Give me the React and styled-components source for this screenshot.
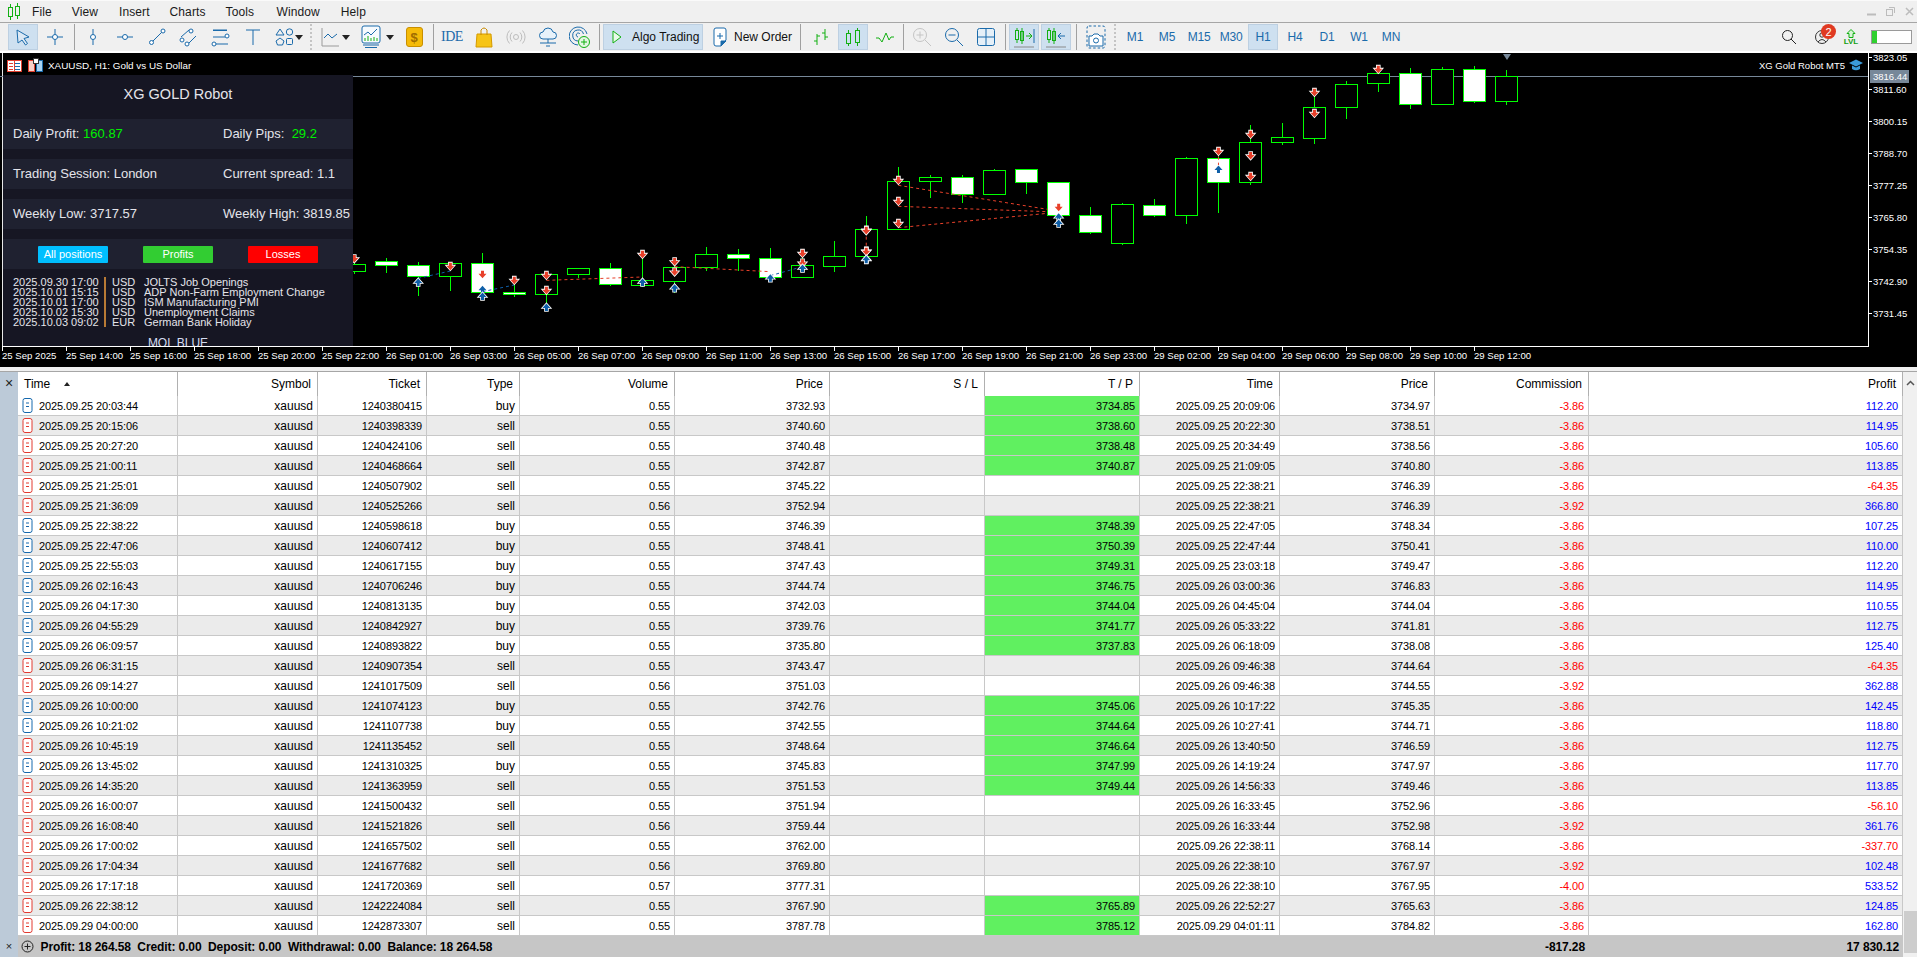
import React from "react";
import styled, { createGlobalStyle } from "styled-components";

const Global = createGlobalStyle`
  html, body { margin: 0; padding: 0; background: #f0f0f0; }
  #root { width: 1917px; height: 957px; overflow: hidden; }
  * { box-sizing: border-box; }
`;
const SANS = `"Liberation Sans", Arial, sans-serif`;
const BLUE = "#1b6bab";
const GREEN = "#12b012";

const Page = styled.div`
  width: 1917px; height: 957px; display: flex; flex-direction: column;
  font-family: ${SANS}; background: #f0f0f0; overflow: hidden; position: relative;
`;
const MenuBar = styled.div`
  height: 22px; display: flex; align-items: center; position: relative; flex: none;
  border-top: 1px solid #fafafa; padding-left: 8px; font-size: 12px; color: #1a1a1a;
`;
const Logo = styled.svg`width: 12px; height: 17px; margin-right: 12px; flex: none;`;
const MenuItem = styled.span`margin-right: ${p => p.$r || 20}px; letter-spacing: .1px;`;
const WinControls = styled.div`
  position: absolute; right: -2px; top: 3px; display: flex; align-items: center; height: 14px;
`;
const WinSlot = styled.span`width: 19px; display: flex; justify-content: center;`;
const ToolBar = styled.div`
  height: 31px; flex: none; display: flex; align-items: center; padding-left: 7px;
  border-top: 1px solid #a6a6a6; border-bottom: 2px solid #fff; background: #f0f0f0; position: relative;
`;
const Tool = styled.div`
  width: ${p => p.$w || 30}px; height: 26px; margin: 0 1px; flex: none; display: flex; align-items: center;
  justify-content: ${p => p.$left ? "flex-start" : "center"}; gap: ${p => p.$gap || 0}px;
  padding-left: ${p => p.$pl || 0}px;
  background: ${p => p.$on ? "#cee0f0" : "transparent"};
  border: 1px solid ${p => p.$on ? "#bdd0e2" : "transparent"};
  font-size: 12px; color: #111;
`;
const Period = styled(Tool)`
  color: ${BLUE}; font-size: 12px; letter-spacing: -.2px;
`;
const Sep = styled.div`
  width: ${p => p.$w || 6}px; height: 26px; flex: none; position: relative; display: flex; justify-content: center;
  &::after { content: ""; width: 1px; height: 100%; ${p => p.$dotted
    ? "border-left: 2px dotted #c4c4c4;" : "background: #a0a0a0;"} }
`;
const Caret = styled.span`
  width: 0; height: 0; border-left: 4px solid transparent; border-right: 4px solid transparent;
  border-top: 5px solid #222; flex: none;
`;
const IdeText = styled.span`font-family: "Liberation Serif", serif; color: ${BLUE}; font-size: 14px; letter-spacing: -.5px;`;
const Dollar = styled.span`
  width: 17px; height: 20px; border-radius: 3px; background: #f5bb0a; border: 1px solid #c98f00; color: #a06c00;
  font-size: 13px; font-weight: 700; display: flex; align-items: center; justify-content: center;
`;
const RightGroup = styled.div`margin-left: auto; display: flex; align-items: center; padding-right: 5px; height: 26px;`;
const Slot = styled.div`
  width: ${p => p.$w}px; height: 26px; display: flex; align-items: center; justify-content: center; position: relative; flex: none;
`;
const Badge = styled.span`
  position: absolute; left: 16px; top: 0; width: 15px; height: 15px; border-radius: 50%;
  background: #e03a22; color: #fff; font-size: 11px; display: flex; align-items: center; justify-content: center;
`;
const LevelBar = styled.div`
  width: 41px; height: 14px; background: #fff; border: 1px solid #9a9a9a; flex: none; margin-left: 7px;
  &::before { content: ""; display: block; width: 5px; height: 100%; background: #2fd02f; }
`;
const ChartArea = styled.div`height: 314px; flex: none; position: relative; background: #000; overflow: hidden;`;
const ChartSvg = styled.svg`display: block; width: 1917px; height: 314px;`;
const RobotPanel = styled.div`
  position: absolute; left: 3px; top: 22px; width: 350px; height: 271px; background: #161623;
  color: #e4e4ea; overflow: hidden; font-size: 13px;
`;
const RobotTitle = styled.div`height: 44px; padding-top: 10px; line-height: 18px; text-align: center; font-size: 14.5px;`;
const InfoRow = styled.div`
  height: 30px; margin-bottom: 10px; background: #1f2130; display: grid; grid-template-columns: 210px 1fr;
  align-items: center; padding: 0 0 2px 10px; white-space: pre;
`;
const Val = styled.span`color: #00f000;`;
const FilterRow = styled.div`
  height: 30px; background: #1f2130; display: flex; align-items: center; padding-left: 35px; gap: 35px;
`;
const FilterBtn = styled.div`
  width: 70px; height: 17px; border-radius: 1px; background: ${p => p.$c}; color: #fff; font-size: 11px;
  display: flex; align-items: center; justify-content: center;
`;
const NewsList = styled.div`
  margin-top: 8px; padding-left: 10px; display: grid; grid-template-columns: 91px 40px 1fr;
  font-size: 11px; line-height: 10px; white-space: nowrap;
`;
const NewsCur = styled.span`border-left: 2px solid #b87a35; padding-left: 6px; height: 10px;`;
const MqlLabel = styled.div`text-align: center; font-size: 12px; margin-top: 9px; line-height: 14px; color: #d4dcf0;`;
const Gap = styled.div`height: 4px; flex: none; background: #f0f0f0;`;
const Terminal = styled.div`flex: 1; display: flex; border-top: 1px solid #a6a6a6; min-height: 0;`;
const SideTab = styled.div`
  width: 18px; flex: none; background: #bccad8; display: flex; flex-direction: column; justify-content: space-between;
  align-items: center; font-size: 13px; color: #222; overflow: hidden;
`;
const SideX = styled.span`line-height: 22px; height: 22px; font-size: ${p => p.$s || 14}px;`;
const GridWrap = styled.div`width: 1885px; flex: none; background: #fff; overflow: hidden;`;
const Table = styled.table`
  width: 1885px; table-layout: fixed; border-collapse: separate; border-spacing: 0; font-size: 11px; color: #000;
`;
const Th = styled.th`
  height: 24px; padding: 0 6px 0 0; font-weight: 400; font-size: 12px; text-align: ${p => p.$left ? "left" : "right"};
  border-right: 1px solid #b0b0b0; background: #fff; white-space: nowrap; color: #000;
`;
const HeadTime = styled.span`display: inline-flex; align-items: center; gap: 14px; padding-left: 6px;`;
const SortCaret = styled.span`
  width: 0; height: 0; border-left: 3px solid transparent; border-right: 3px solid transparent; border-bottom: 4px solid #222;
`;
const Tr = styled.tr`background: ${p => p.$alt ? "#ebebeb" : "#fff"};`;
const Td = styled.td`
  height: 20px; padding: 0 4px 0 0; text-align: right; white-space: nowrap; border-bottom: 1px solid #c8c8c8;
  border-right: 1px solid #c8c8c8; font-size: ${p => p.$text ? 12 : 11}px; letter-spacing: ${p => p.$text ? 0 : "-.1px"};
  background: ${p => p.$tp ? "#60f060" : "transparent"};
  color: ${p => p.$c || "#000"};
`;
const TimeCell = styled.div`display: flex; align-items: center; gap: 6px; padding-left: 4px; text-align: left;`;
const DealIcon = styled.svg`width: 11px; height: 15px; flex: none;`;
const FootTd = styled.td`
  height: 21px; background: #c6c6c6; font-weight: 700; font-size: 12px; padding: 0 4px 0 0; text-align: right; color: #000;
  white-space: nowrap; letter-spacing: -.1px;
`;
const Summary = styled.div`display: flex; align-items: center; gap: 6.500px; padding-left: 3px; text-align: left;`;
const ScrollTrack = styled.div`width: 14px; flex: none; background: #f0f0f0; display: flex; flex-direction: column; position: relative;`;
const ScrollUp = styled.div`height: 22px; display: flex; align-items: center; justify-content: center; flex: none;`;
const ScrollThumb = styled.div`margin-top: auto; height: 42px; background: #cdcdcd; margin-bottom: 4px; margin-left: 1px;`;

const rowsRaw = `25 20:03:44|1240380415|buy|0.55|3732.93|3734.85|25 20:09:06|3734.97|-3.86|112.20
25 20:15:06|1240398339|sell|0.55|3740.60|3738.60|25 20:22:30|3738.51|-3.86|114.95
25 20:27:20|1240424106|sell|0.55|3740.48|3738.48|25 20:34:49|3738.56|-3.86|105.60
25 21:00:11|1240468664|sell|0.55|3742.87|3740.87|25 21:09:05|3740.80|-3.86|113.85
25 21:25:01|1240507902|sell|0.55|3745.22||25 22:38:21|3746.39|-3.86|-64.35
25 21:36:09|1240525266|sell|0.56|3752.94||25 22:38:21|3746.39|-3.92|366.80
25 22:38:22|1240598618|buy|0.55|3746.39|3748.39|25 22:47:05|3748.34|-3.86|107.25
25 22:47:06|1240607412|buy|0.55|3748.41|3750.39|25 22:47:44|3750.41|-3.86|110.00
25 22:55:03|1240617155|buy|0.55|3747.43|3749.31|25 23:03:18|3749.47|-3.86|112.20
26 02:16:43|1240706246|buy|0.55|3744.74|3746.75|26 03:00:36|3746.83|-3.86|114.95
26 04:17:30|1240813135|buy|0.55|3742.03|3744.04|26 04:45:04|3744.04|-3.86|110.55
26 04:55:29|1240842927|buy|0.55|3739.76|3741.77|26 05:33:22|3741.81|-3.86|112.75
26 06:09:57|1240893822|buy|0.55|3735.80|3737.83|26 06:18:09|3738.08|-3.86|125.40
26 06:31:15|1240907354|sell|0.55|3743.47||26 09:46:38|3744.64|-3.86|-64.35
26 09:14:27|1241017509|sell|0.56|3751.03||26 09:46:38|3744.55|-3.92|362.88
26 10:00:00|1241074123|buy|0.55|3742.76|3745.06|26 10:17:22|3745.35|-3.86|142.45
26 10:21:02|1241107738|buy|0.55|3742.55|3744.64|26 10:27:41|3744.71|-3.86|118.80
26 10:45:19|1241135452|sell|0.55|3748.64|3746.64|26 13:40:50|3746.59|-3.86|112.75
26 13:45:02|1241310325|buy|0.55|3745.83|3747.99|26 14:19:24|3747.97|-3.86|117.70
26 14:35:20|1241363959|sell|0.55|3751.53|3749.44|26 14:56:33|3749.46|-3.86|113.85
26 16:00:07|1241500432|sell|0.55|3751.94||26 16:33:45|3752.96|-3.86|-56.10
26 16:08:40|1241521826|sell|0.56|3759.44||26 16:33:44|3752.98|-3.92|361.76
26 17:00:02|1241657502|sell|0.55|3762.00||26 22:38:11|3768.14|-3.86|-337.70
26 17:04:34|1241677682|sell|0.56|3769.80||26 22:38:10|3767.97|-3.92|102.48
26 17:17:18|1241720369|sell|0.57|3777.31||26 22:38:10|3767.95|-4.00|533.52
26 22:38:12|1242224084|sell|0.55|3767.90|3765.89|26 22:52:27|3765.63|-3.86|124.85
29 04:00:00|1242873307|sell|0.55|3787.78|3785.12|29 04:01:11|3784.82|-3.86|162.80`;
const rows = rowsRaw.split("\n").map(l => l.split("|"));
const colW = [160, 140, 109, 93, 155, 155, 155, 155, 140, 155, 154, 314];

// candles: k, wickTop, bodyTop, bodyBottom, wickBottom, filled (zoom row units)
const candlesA = [
  [0, 30, 49, 124, 134, 0], [1, 18, 28, 124, 128, 1], [2, 22, 28, 133, 133, 0], [3, 24, 40, 133, 146, 1],
  [4, 18, 40, 70, 95, 0], [5, 64, 73, 142, 176, 0], [6, 108, 142, 235, 251, 0], [7, 190, 232, 247, 254, 0],
  [8, 196, 247, 367, 374, 0], [9, 275, 295, 367, 458, 1], [10, 292, 295, 466, 491, 0], [11, 417, 436, 466, 471, 1],
  [12, 430, 433, 550, 554, 0], [13, 441, 466, 517, 521, 1], [14, 367, 367, 466, 470, 1], [15, 328, 328, 367, 401, 1],
  [16, 328, 331, 403, 403, 0], [17, 346, 352, 403, 428, 1], [18, 346, 352, 364, 413, 0], [19, 321, 364, 508, 508, 0],
];
const candlesB = [
  [20, 198, 238, 320, 320, 0], [21, 273, 319, 350, 365, 0], [22, 320, 346, 382, 382, 0], [23, 294, 325, 382, 382, 1],
  [24, 297, 313, 325, 362, 1], [25, 292, 313, 352, 362, 0], [26, 330, 352, 394, 428, 0], [27, 310, 391, 406, 411, 0],
  [28, 340, 355, 403, 407, 1], [29, 355, 355, 374, 384, 0], [30, 367, 373, 433, 470, 0], [31, 395, 427, 433, 440, 1],
  [32, 310, 340, 427, 427, 1], [33, 340, 340, 380, 422, 0], [34, 337, 346, 380, 437, 1], [35, 325, 334, 346, 368, 1],
  [36, 325, 343, 365, 372, 0],
];
const ax = z => 860 + z / 2.24, ay = z => 60 + z / 3;
const bx = z => 340 + z / 2.8, by = z => 150 + z / 3;
const candles = [
  ...candlesA.map(c => [c[0], ...c.slice(1, 5).map(ay), c[5]]),
  ...candlesB.map(c => [c[0], ...c.slice(1, 5).map(by), c[5]]),
];
const downB = [[40,327],[309,350],[488,392],[578,377],[578,422],[847,314],[937,336],[937,367],[1295,311],[1295,340],[1474,241],[1474,304]];
const upB = [[219,396],[399,438],[578,471],[847,396],[937,413],[1205,383],[1295,354],[1474,327]];
const downA = [[14,513],[14,575],[86,362],[86,425],[86,491],[803,275],[875,224],[875,288],[875,350],[1018,98],[1018,161],[1161,29]];
const upA = [[14,598],[445,470],[445,489]];
const DOWN = "-1.5,-4 1.5,-4 1.5,-1 4,-1 0,3.5 -4,-1 -1.5,-1";
const UP = "-1.5,4 1.5,4 1.5,1 4,1 0,-3.5 -4,1 -1.5,1";
const RED = "#e8402a", MBLUE = "#0f5fa8";
const Arrow = ({ x, y, up, plain }) => (
  <polygon transform={`translate(${x} ${y})`} points={up ? UP : DOWN} fill={up ? MBLUE : RED}
    stroke={plain ? "none" : "#fff"} strokeWidth="1.6" paintOrder="stroke" />
);
const Dash = ({ x1, y1, x2, y2, c = RED }) => <line x1={x1} y1={y1} x2={x2} y2={y2} stroke={c} strokeWidth="1" strokeDasharray="3 3" />;
const prices = ["3823.05", "3811.60", "3800.15", "3788.70", "3777.25", "3765.80", "3754.35", "3742.90", "3731.45"];
const times = ["25 Sep 14:00","25 Sep 16:00","25 Sep 18:00","25 Sep 20:00","25 Sep 22:00","26 Sep 01:00","26 Sep 03:00","26 Sep 05:00","26 Sep 07:00","26 Sep 09:00","26 Sep 11:00","26 Sep 13:00","26 Sep 15:00","26 Sep 17:00","26 Sep 19:00","26 Sep 21:00","26 Sep 23:00","29 Sep 02:00","29 Sep 04:00","29 Sep 06:00","29 Sep 08:00","29 Sep 10:00","29 Sep 12:00"];

const Chart = () => (
  <ChartSvg viewBox="0 53 1917 314" fontFamily={SANS}>
    <g shapeRendering="crispEdges">
      <line x1="2.5" y1="53" x2="2.5" y2="346" stroke="#e8e8e8" />
      <line x1="0" y1="76.5" x2="1868" y2="76.5" stroke="#778899" />
      {candles.map(([k, wt, bt, bb, wb, f]) => {
        const x = Math.round(1506 - 32 * k) + .5;
        return (
          <g key={k}>
            <line x1={x} y1={Math.round(wt)} x2={x} y2={Math.round(wb)} stroke="#00ff00" />
            <rect x={x - 11} y={Math.round(bt) + .5} width="22" height={Math.round(bb - bt)} fill={f ? "#fff" : "#000"} stroke="#00ff00" />
          </g>
        );
      })}
      <line x1="2" y1="346.5" x2="1869" y2="346.5" stroke="#fff" />
      <line x1="1868.5" y1="53" x2="1868.5" y2="347" stroke="#fff" />
      <line x1="2.5" y1="346" x2="2.5" y2="351" stroke="#fff" />
      {times.map((t, i) => <line key={t} x1={66.5 + 64 * i} y1="346" x2={66.5 + 64 * i} y2="351" stroke="#fff" />)}
      {prices.map((p, i) => <line key={p} x1="1868" y1={57.5 + 32 * i} x2="1872" y2={57.5 + 32 * i} stroke="#fff" />)}
      <rect x="1870" y="70" width="39" height="13" fill="#778899" />
    </g>
    <Dash x1={ax(86)} y1={ay(376)} x2={ax(420)} y2={ay(448)} />
    <Dash x1={ax(86)} y1={ay(439)} x2={ax(420)} y2={ay(455)} />
    <Dash x1={ax(86)} y1={ay(503)} x2={ax(420)} y2={ay(460)} />
    <Dash x1={ax(14)} y1={ay(530)} x2={ax(14)} y2={ay(560)} />
    <Dash x1={ax(803)} y1={ay(290)} x2={ax(803)} y2={ay(315)} />
    <Dash x1={bx(219)} y1={by(385)} x2={bx(309)} y2={by(363)} c={MBLUE} />
    <Dash x1={bx(399)} y1={by(425)} x2={bx(488)} y2={by(405)} c={MBLUE} />
    <Dash x1={bx(578)} y1={by(391)} x2={bx(847)} y2={by(381)} />
    <Dash x1={bx(937)} y1={by(350)} x2={bx(1205)} y2={by(365)} />
    <Dash x1={bx(1205)} y1={by(377)} x2={bx(1295)} y2={by(350)} c={MBLUE} />
    {downB.map(([x, y], i) => <Arrow key={"db" + i} x={bx(x)} y={by(y)} />)}
    {downA.map(([x, y], i) => <Arrow key={"da" + i} x={ax(x)} y={ay(y)} />)}
    <Arrow x={bx(399)} y={by(374)} plain />
    <Arrow x={bx(399)} y={by(418)} up plain />
    <Arrow x={ax(445)} y={ay(443)} plain />
    <Arrow x={ax(803)} y={ay(327)} up plain />
    {upB.map(([x, y], i) => <Arrow key={"ub" + i} x={bx(x)} y={by(y)} up />)}
    {upA.map(([x, y], i) => <Arrow key={"ua" + i} x={ax(x)} y={ay(y)} up />)}
    <polygon points="1503,54 1511,54 1507,60" fill="#778899" />
    {/* chart header glyphs */}
    <g shapeRendering="crispEdges">
      <rect x="7.5" y="60.5" width="14" height="11" fill="#fff" stroke="#e04030" />
      <path d="M9 63h4M9 66h4M9 69h4" stroke="#e04030" />
      <path d="M15 63h5M15 66h5M15 69h5" stroke="#1b6bab" />
      <path d="M14.5 61v10" stroke="#e04030" />
      <rect x="28.5" y="60.5" width="6" height="11" fill="#f6d0c8" stroke="#e04030" />
      <rect x="36.5" y="60.5" width="6" height="11" fill="#a8d4f4" stroke="#1b6bab" />
      <rect x="33" y="58" width="5" height="5" fill="#fff" stroke="#333" />
    </g>
    <text x="48" y="69" fontSize="9.9" fill="#fff">XAUUSD, H1:  Gold vs US Dollar</text>
    <text x="1845" y="69" fontSize="9.5" fill="#fff" textAnchor="end">XG Gold Robot MT5</text>
    <path d="M1849 63l7-3.5 7 3.5-7 3.5z" fill="#3a9ad9" />
    <path d="M1852 65.5v3.5q4 2.5 8 0v-3.5l-4 2z" fill="#3a9ad9" />
    {prices.map((p, i) => <text key={p} x="1873" y={61 + 32 * i} fontSize="9.5" fill="#fff">{p}</text>)}
    <text x="1873" y="80" fontSize="9.5" fill="#fff">3816.44</text>
    <text x="2" y="359" fontSize="9.6" fill="#fff">25 Sep 2025</text>
    {times.map((t, i) => <text key={t} x={66 + 64 * i} y="359" fontSize="9.6" fill="#fff">{t}</text>)}
  </ChartSvg>
);

const Ico = ({ w = 20, h = 20, children, vb }) => (
  <svg width={w} height={h} viewBox={vb || `0 0 ${w} ${h}`} fill="none" stroke={BLUE} strokeWidth="1">{children}</svg>
);
const CursorIcon = () => <Ico><path d="M4 3l12 7-5 1.500 3.500 5-2 1.500-3.500-5L5 16z" fill="#dce9f5" /></Ico>;
const CrossIcon = () => <Ico><path d="M10 2v16M2 10h16" /><circle cx="10" cy="10" r="2.500" fill="#fff" /></Ico>;
const VLineIcon = () => <Ico><path d="M10 2v16" /><circle cx="10" cy="10" r="2.500" fill="#fff" /></Ico>;
const HLineIcon = () => <Ico><path d="M2 10h16" /><circle cx="10" cy="10" r="2.500" fill="#fff" /></Ico>;
const TrendIcon = () => <Ico><path d="M6 14L15 5" /><circle cx="4.500" cy="15.500" r="2" fill="#fff" /><circle cx="16" cy="4" r="2" fill="#fff" /></Ico>;
const ChannelIcon = () => <Ico><path d="M2 10l8-7M9 17l8-8" /><circle cx="3" cy="13" r="2" fill="#fff" /><circle cx="12" cy="4" r="2" fill="#fff" /><circle cx="8" cy="17" r="2" fill="#fff" /></Ico>;
const FiboIcon = () => <Ico><path d="M2 3h14M2 10h12M4 17h13" /><circle cx="16" cy="9" r="2" fill="#fff" /><circle cx="3" cy="17" r="2" fill="#fff" /><path d="M2 3.500h14" /></Ico>;
const TextIcon = () => <Ico><path d="M3 3h14M10 3v15" /></Ico>;
const ShapesIcon = () => <Ico><path d="M5 2l4 6H1z" /><circle cx="14.500" cy="5" r="3.200" /><path d="M5 11l4 3-1.500 4h-5L1 14z" /><rect x="11.500" y="11.500" width="6" height="6" rx="1" /></Ico>;
const LineChartIcon = () => (
  <Ico w={18} h={22}><path d="M1 2v18h17" stroke="#9a9a9a" /><path d="M3 12l4-4 4 4 5-4" /></Ico>
);
const IndicatorIcon = () => (
  <Ico w={20} h={24}>
    <rect x="1" y="1" width="18" height="17" rx="2" fill="#f6fafd" />
    <path d="M3 10l4-3 3 3 6-6" />
    <path d="M4 16v-3M7 16v-5M10 16v-3M13 16v-4M16 16v-3" stroke={GREEN} />
    <path d="M2 20h16M4 22.500h12" />
  </Ico>
);
const BagIcon = () => (
  <Ico w={18} h={22}><path d="M2 8h14l1 13H1z" fill="#f6c417" stroke="#d59a00" /><path d="M6 9V4q3-4 6 0v5" stroke="#c88a00" /></Ico>
);
const SignalIcon = () => (
  <Ico><g stroke="#bdbdbd"><circle cx="10" cy="10" r="2.500" /><path d="M6 5.500a6.500 6.500 0 000 9M14 5.500a6.500 6.500 0 010 9M3.500 3.500a9.500 9.500 0 000 13M16.500 3.500a9.500 9.500 0 010 13" /></g></Ico>
);
const CloudIcon = () => (
  <Ico w={20} h={22}><path d="M5 13a3.500 3.500 0 010-7q1-4 5-4t5 4a3.500 3.500 0 010 7z" fill="#e8f2fa" /><path d="M10 13v4M2 17h16M8 20h4" /></Ico>
);
const RadarIcon = () => (
  <Ico w={22} h={24}>
    <path d="M9 20a9 9 0 119-11M9 16a5.500 5.500 0 115.500-7M9 12a2 2 0 112-3" />
    <circle cx="15" cy="17" r="5.500" fill="#e4f6e4" stroke={GREEN} />
    <path d="M15 14v6M12 17h6" stroke={GREEN} />
  </Ico>
);
const PlayIcon = () => <Ico w={12} h={16}><path d="M2 2l8 6-8 6z" stroke={GREEN} fill="#eafaea" /></Ico>;
const NewOrderIcon = () => (
  <Ico w={14} h={20}><path d="M3 1h8q2 0 2 2v10l-5 6H3q-2 0-2-2V3q0-2 2-2z" fill="#fff" /><path d="M7 6v6M4 9h6" /><path d="M13 14l-5 5v-5z" fill={BLUE} /></Ico>
);
const BarsIcon = () => <Ico><g stroke={GREEN}><path d="M6 7v11M3 14h3M6 9h3M14 2v11M11 6h3M14 10h3" /></g></Ico>;
const CandlesIcon = () => <Ico><g stroke={GREEN}><rect x="3.500" y="6.500" width="4" height="10" /><path d="M5.500 3v3M5.500 17v2" /><rect x="12.500" y="3.500" width="4" height="12" /><path d="M14.500 1v2M14.500 16v3" /></g></Ico>;
const LineIcon = () => <Ico><path d="M1 11h3l3 4 4-9 3 7 2-3h3" stroke={GREEN} /></Ico>;
const ZoomIcon = ({ plus, c }) => (
  <Ico w={22} h={22}><g stroke={c}><circle cx="9" cy="9" r="6.500" /><path d="M14 14l6 6M5.500 9h7" />{plus && <path d="M9 5.500v7" />}</g></Ico>
);
const GridIcon = () => <Ico><rect x="1.500" y="1.500" width="17" height="17" rx="2" fill="#e6f0f8" /><path d="M10 1.500v17M1.500 10h17" /></Ico>;
const ShiftIcon = ({ left }) => (
  <Ico w={22} h={22}>
    <g stroke={GREEN}><rect x="2.500" y="4.500" width="3" height="9" /><path d="M4 2v2M4 14v3M9 2v16" /><rect x="7.500" y="5.500" width="3" height="9" /></g>
    <path d={left ? "M20 10h-7M16 7l-3 3 3 3" : "M13 10h6M16 7l3 3-3 3"} stroke={left ? BLUE : GREEN} />
    {!left && <path d="M21 3v14" />}
    <path d="M1 21h20" stroke="#8a8a8a" />
  </Ico>
);
const CameraIcon = () => (
  <Ico w={20} h={24}>
    <rect x="1" y="1" width="18" height="22" rx="2" strokeDasharray="2.500 2" />
    <path d="M3 11h3l2-2h4l2 2h3v10H3z" fill="#fff" /><circle cx="10" cy="15.500" r="2.500" />
  </Ico>
);
const SearchIcon = () => <Ico w={16} h={16}><g stroke="#222"><circle cx="6.500" cy="6.500" r="5" /><path d="M10 10l5 5" /></g></Ico>;
const UserIcon = () => <Ico w={16} h={18}><g stroke="#333"><circle cx="8" cy="9" r="6.500" /><circle cx="8" cy="7" r="2.200" /><path d="M4 14q4-5 8 0" /></g></Ico>;
const LvlIcon = () => (
  <Ico w={12} h={9}><path d="M6 .5l4 4H8v4H4v-4H2z" stroke={GREEN} fill="#d8f5d8" /></Ico>
);
const LvlText = styled.span`font-size: 8px; font-weight: 700; color: #12a012; line-height: 8px;`;
const LvlBox = styled.div`display: flex; flex-direction: column; align-items: center; width: 20px;`;

const DealGlyph = ({ buy }) => {
  const c = buy ? "#1568ad" : "#e23a30";
  return (
    <DealIcon viewBox="0 0 11 15">
      <rect x="1" y=".5" width="9" height="14" rx="2" fill="#fff" stroke={c} strokeWidth="1" />
      <path d="M4 5h3M4 8.500h3" stroke={c} strokeWidth="1" />
    </DealIcon>
  );
};

const news = [
  ["2025.09.30 17:00", "USD", "JOLTS Job Openings"],
  ["2025.10.01 15:15", "USD", "ADP Non-Farm Employment Change"],
  ["2025.10.01 17:00", "USD", "ISM Manufacturing PMI"],
  ["2025.10.02 15:30", "USD", "Unemployment Claims"],
  ["2025.10.03 09:02", "EUR", "German Bank Holiday"],
];
const heads = ["Symbol", "Ticket", "Type", "Volume", "Price", "S / L", "T / P", "Time", "Price", "Commission", "Profit"];

export default function App() {
  return (
    <Page>
      <Global />
      <MenuBar>
        <Logo viewBox="0 0 12 17" fill="none" stroke="#12b012"><rect x=".5" y="4.500" width="4" height="9" /><rect x="7.500" y="3.500" width="4" height="9" /><path d="M2.500 1v3M2.500 14v3M9.500 0v3M9.500 13v3" /></Logo>
        <MenuItem>File</MenuItem><MenuItem $r={21}>View</MenuItem><MenuItem>Insert</MenuItem><MenuItem>Charts</MenuItem>
        <MenuItem $r={22.5}>Tools</MenuItem><MenuItem $r={21}>Window</MenuItem><MenuItem>Help</MenuItem>
        <WinControls>
          <WinSlot><svg width="9" height="9" viewBox="0 0 9 9" fill="none" stroke="#bcbcbc" strokeWidth="2"><path d="M0 7.500h9" /></svg></WinSlot>
          <WinSlot><svg width="9" height="9" viewBox="0 0 9 9" fill="none" stroke="#bcbcbc"><rect x=".5" y="2.500" width="6" height="6" /><path d="M3 .5h5.500V6" /></svg></WinSlot>
          <WinSlot><svg width="9" height="9" viewBox="0 0 9 9" fill="none" stroke="#bcbcbc" strokeWidth="1.500"><path d="M1 1l7 7M8 1L1 8" /></svg></WinSlot>
        </WinControls>
      </MenuBar>
      <ToolBar>
        <Tool $on><CursorIcon /></Tool><Tool><CrossIcon /></Tool><Sep />
        <Tool><VLineIcon /></Tool><Tool><HLineIcon /></Tool><Tool><TrendIcon /></Tool><Tool><ChannelIcon /></Tool>
        <Tool><FiboIcon /></Tool><Tool><TextIcon /></Tool>
        <Tool $w={37} $gap={0}><ShapesIcon /><Caret /></Tool><Sep $dotted />
        <Tool $w={41} $gap={3}><LineChartIcon /><Caret /></Tool>
        <Tool $w={39} $gap={5}><IndicatorIcon /><Caret /></Tool>
        <Tool><Dollar>$</Dollar></Tool><Sep />
        <Tool><IdeText>IDE</IdeText></Tool><Tool><BagIcon /></Tool><Tool><SignalIcon /></Tool><Tool><CloudIcon /></Tool><Tool><RadarIcon /></Tool><Sep />
        <Tool $w={100} $on $left $pl={7} $gap={9}><PlayIcon />Algo Trading</Tool>
        <Tool $w={89} $left $pl={7} $gap={7}><NewOrderIcon />New Order</Tool>
        <Sep $w={10} />
        <Tool><BarsIcon /></Tool><Tool $on><CandlesIcon /></Tool><Tool><LineIcon /></Tool><Sep $w={5} />
        <Tool><ZoomIcon plus c="#c4c4c4" /></Tool><Tool><ZoomIcon c={BLUE} /></Tool><Tool><GridIcon /></Tool><Sep />
        <Tool $on><ShiftIcon /></Tool><Tool $on><ShiftIcon left /></Tool><Sep $w={8} />
        <Tool><CameraIcon /></Tool><Sep $dotted $w={7} />
        <Period>M1</Period><Period>M5</Period><Period>M15</Period><Period>M30</Period><Period $on>H1</Period>
        <Period>H4</Period><Period>D1</Period><Period>W1</Period><Period>MN</Period>
        <RightGroup>
          <Slot $w={32}><SearchIcon /></Slot>
          <Slot $w={33}><UserIcon /><Badge>2</Badge></Slot>
          <Slot $w={26}><LvlBox><LvlIcon /><LvlText>LVL</LvlText></LvlBox></Slot>
          <LevelBar />
        </RightGroup>
      </ToolBar>
      <ChartArea>
        <Chart />
        <RobotPanel>
          <RobotTitle>XG GOLD Robot</RobotTitle>
          <InfoRow><span>Daily Profit: <Val>160.87</Val></span><span>Daily Pips:  <Val>29.2</Val></span></InfoRow>
          <InfoRow><span>Trading Session: London</span><span>Current spread: 1.1</span></InfoRow>
          <InfoRow><span>Weekly Low: 3717.57</span><span>Weekly High: 3819.85</span></InfoRow>
          <FilterRow>
            <FilterBtn $c="#00bfff">All positions</FilterBtn>
            <FilterBtn $c="#32cd32">Profits</FilterBtn>
            <FilterBtn $c="#ff0000">Losses</FilterBtn>
          </FilterRow>
          <NewsList>
            {news.map(n => (
              <React.Fragment key={n[0]}><span>{n[0]}</span><NewsCur>{n[1]}</NewsCur><span>{n[2]}</span></React.Fragment>
            ))}
          </NewsList>
          <MqlLabel>MQL BLUE</MqlLabel>
        </RobotPanel>
      </ChartArea>
      <Gap />
      <Terminal>
        <SideTab><SideX>×</SideX><SideX $s={11}>×</SideX></SideTab>
        <GridWrap>
          <Table>
            <colgroup>{colW.map((w, i) => <col key={i} width={w} />)}</colgroup>
            <thead>
              <tr>
                <Th $left><HeadTime>Time<SortCaret /></HeadTime></Th>
                {heads.map((h, i) => <Th key={i}>{h}</Th>)}
              </tr>
            </thead>
            <tbody>
              {rows.map((r, i) => (
                <Tr key={r[1]} $alt={i % 2 === 1}>
                  <Td><TimeCell><DealGlyph buy={r[2] === "buy"} />2025.09.{r[0]}</TimeCell></Td>
                  <Td $text>xauusd</Td>
                  <Td>{r[1]}</Td>
                  <Td $text>{r[2]}</Td>
                  <Td>{r[3]}</Td>
                  <Td>{r[4]}</Td>
                  <Td />
                  <Td $tp={!!r[5]}>{r[5]}</Td>
                  <Td>2025.09.{r[6]}</Td>
                  <Td>{r[7]}</Td>
                  <Td $c="#ff0000">{r[8]}</Td>
                  <Td $c={r[9].startsWith("-") ? "#ff0000" : "#0000ff"}>{r[9]}</Td>
                </Tr>
              ))}
            </tbody>
            <tfoot>
              <tr>
                <FootTd colSpan={10}>
                  <Summary>
                    <svg width="13" height="13" viewBox="0 0 13 13" fill="none" stroke="#222"><circle cx="6.500" cy="6.500" r="5.500" /><path d="M6.500 3.500v6M3.500 6.500h6" /></svg>
                    <span>Profit: 18 264.58</span><span>Credit: 0.00</span><span>Deposit: 0.00</span><span>Withdrawal: 0.00</span><span>Balance: 18 264.58</span>
                  </Summary>
                </FootTd>
                <FootTd>-817.28</FootTd>
                <FootTd>17 830.12</FootTd>
              </tr>
            </tfoot>
          </Table>
        </GridWrap>
        <ScrollTrack>
          <ScrollUp><svg width="9" height="6" viewBox="0 0 9 6" fill="none" stroke="#555" strokeWidth="1.500"><path d="M1 5l3.500-3.500L8 5" /></svg></ScrollUp>
          <ScrollThumb />
        </ScrollTrack>
      </Terminal>
    </Page>
  );
}
